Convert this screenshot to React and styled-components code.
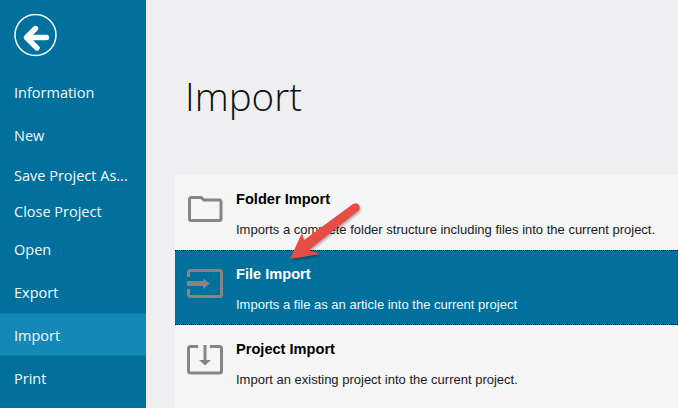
import styled, { createGlobalStyle } from "styled-components";

const Global = createGlobalStyle`
  html, body {
    margin: 0;
    padding: 0;
    overflow: hidden;
  }
`;

const Page = styled.div`
  position: relative;
  display: flex;
  width: 678px;
  height: 408px;
  overflow: hidden;
  background: #efeff1;
`;

const Sidebar = styled.div`
  flex: none;
  width: 146px;
  background: #01709d;
  display: flex;
  flex-direction: column;
`;

const BackWrap = styled.div`
  height: 71px;
  padding: 14px 0 0 14px;
  box-sizing: border-box;
`;

const NavItem = styled.div`
  box-sizing: border-box;
  height: ${(props) => props.h || 43}px;
  display: flex;
  align-items: center;
  padding-left: 14px;
  padding-top: ${(props) => props.nudge || 0}px;
  font-family: "Open Sans", sans-serif;
  font-size: 14.5px;
  color: #f4fafc;
  background: ${(props) => (props.active ? "#1488b6" : "transparent")};
  border-top: ${(props) => (props.active ? "1px solid #0b7ba7" : "none")};
  border-bottom: ${(props) => (props.active ? "1px solid #0b7ba7" : "none")};
`;

const Main = styled.div`
  flex: 1;
  min-width: 0;
  padding-left: 29px;
`;

const Title = styled.div`
  margin-left: 10px;
  height: 175px;
  box-sizing: border-box;
  padding-top: 66px;
  font-family: "Open Sans", sans-serif;
  font-weight: 300;
  font-size: 38.5px;
  line-height: 60px;
  color: #111111;
`;

const List = styled.div`
  display: flex;
  flex-direction: column;
  height: 233px;
  background: #f5f5f5;
`;

const Row = styled.div`
  box-sizing: border-box;
  height: 75px;
  display: flex;
  padding-top: ${(props) => (props.selected ? 14 : 15)}px;
  background: ${(props) => (props.selected ? "#01709d" : "transparent")};
  color: ${(props) => (props.selected ? "#f2f7fa" : "#1a1a1a")};
  border-top: ${(props) => (props.selected ? "1px dotted #000" : "none")};
  border-bottom: ${(props) => (props.selected ? "1px dotted #000" : "none")};
`;

const IconCell = styled.div`
  flex: none;
  width: 61px;
  padding: ${(props) => props.top}px 0 0 11px;
  box-sizing: border-box;
`;

const RowText = styled.div`
  font-family: "Liberation Sans", Arial, sans-serif;
`;

const RowTitle = styled.div`
  font-size: 14.6px;
  font-weight: 700;
  line-height: 18px;
  color: ${(props) => (props.selected ? "#ffffff" : "#000000")};
`;

const RowDesc = styled.div`
  margin-top: 14px;
  font-size: 13px;
  line-height: 16px;
`;

const Pointer = styled.svg`
  position: absolute;
  left: 280px;
  top: 195px;
  filter: drop-shadow(1px 2px 1px rgba(0, 0, 0, 0.28));
`;

const BackIcon = () => (
  <svg width="44" height="44" viewBox="0 0 44 44">
    <circle cx="21.5" cy="21" r="20.5" fill="none" stroke="#fff" strokeWidth="1.5" />
    <path
      d="M12.5 23.5 L21.5 14.5 M12.5 23.5 L23 34 M13 23.5 H32.5"
      fill="none"
      stroke="#fff"
      strokeWidth="5.4"
      strokeLinecap="round"
      strokeLinejoin="round"
    />
  </svg>
);

const FolderIcon = () => (
  <svg width="38" height="30" viewBox="0 0 38 30">
    <path
      d="M3.5 4.5 Q3.5 2.5 5.5 2.5 H15 L18 5 H33.5 Q35 5 35 7 V24 Q35 25.5 33.5 25.5 H5 Q3.5 25.5 3.5 24 Z"
      fill="none"
      stroke="#858585"
      strokeWidth="3"
      strokeLinejoin="round"
    />
  </svg>
);

const FileIcon = () => (
  <svg width="38" height="30" viewBox="0 0 38 30">
    <path
      d="M2.5 8 V3.5 Q2.5 1.5 4.5 1.5 H33.5 Q35.5 1.5 35.5 3.5 V25.5 Q35.5 27.5 33.5 27.5 H4.5 Q2.5 27.5 2.5 25.5 V20"
      fill="none"
      stroke="#858585"
      strokeWidth="3"
    />
    <path d="M1 14.5 H18" stroke="#858585" strokeWidth="5" />
    <path d="M17 9.5 L24 14.5 L17 20 Z" fill="#858585" />
  </svg>
);

const ProjectIcon = () => (
  <svg width="38" height="30" viewBox="0 0 38 30">
    <path
      d="M12 1.5 H4.5 Q2.5 1.5 2.5 3.5 V26 Q2.5 28 4.5 28 H33.5 Q35.5 28 35.5 26 V3.5 Q35.5 1.5 33.5 1.5 H24"
      fill="none"
      stroke="#858585"
      strokeWidth="3"
    />
    <path d="M19 0 V16" stroke="#858585" strokeWidth="3" />
    <path d="M13 15 H25 L19 20.5 Z" fill="#858585" />
  </svg>
);

const navItems = [
  { label: "Information" },
  { label: "New" },
  { label: "Save Project As...", h: 37 },
  { label: "Close Project", h: 35 },
  { label: "Open", h: 41 },
  { label: "Export", nudge: 2 },
  { label: "Import", active: true, nudge: 2 },
  { label: "Print", nudge: 2 },
];

const rows = [
  {
    title: "Folder Import",
    desc: "Imports a complete folder structure including files into the current project.",
    icon: <FolderIcon />,
    top: 5,
  },
  {
    title: "File Import",
    desc: "Imports a file as an article into the current project",
    icon: <FileIcon />,
    selected: true,
    top: 4,
  },
  {
    title: "Project Import",
    desc: "Import an existing project into the current project.",
    icon: <ProjectIcon />,
    top: 5,
  },
];

export default function App() {
  return (
    <Page>
      <Global />
      <Sidebar>
        <BackWrap>
          <BackIcon />
        </BackWrap>
        {navItems.map((item) => (
          <NavItem key={item.label} h={item.h} active={item.active} nudge={item.nudge}>
            {item.label}
          </NavItem>
        ))}
      </Sidebar>
      <Main>
        <Title>Import</Title>
        <List>
          {rows.map((row) => (
            <Row key={row.title} selected={row.selected}>
              <IconCell top={row.top}>{row.icon}</IconCell>
              <RowText>
                <RowTitle selected={row.selected}>{row.title}</RowTitle>
                <RowDesc>{row.desc}</RowDesc>
              </RowText>
            </Row>
          ))}
        </List>
      </Main>
      <Pointer width="90" height="72" viewBox="0 0 90 72">
        <path
          d="M10 64 L22 38 L24 45 L73 9 Q77 7 79 10 Q81 14 78 16 L29 55 L40 59 Z"
          fill="#e84c47"
        />
      </Pointer>
    </Page>
  );
}
